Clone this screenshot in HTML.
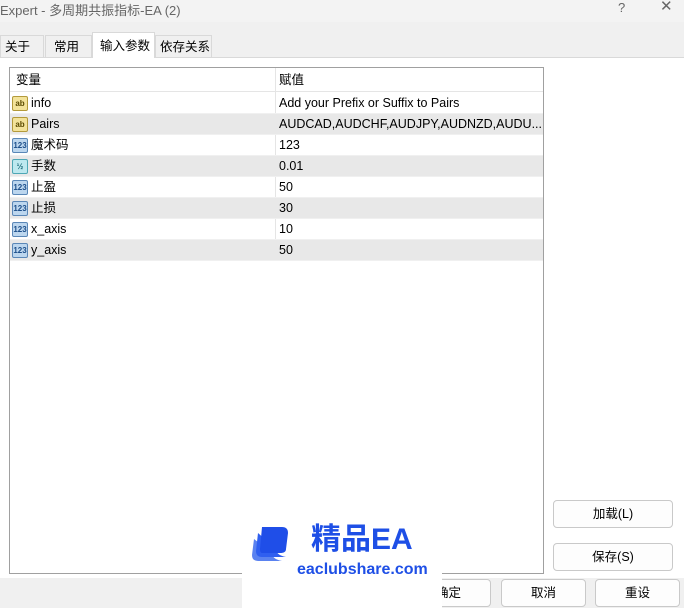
<!DOCTYPE html>
<html><head><meta charset="utf-8"><style>
*{box-sizing:border-box;margin:0;padding:0}
body{width:684px;height:608px;background:#f0f0f0;font-family:"Liberation Sans","Noto Sans CJK SC",sans-serif;font-size:12.5px;color:#000;position:relative;overflow:hidden;line-height:15px}
.abs{position:absolute}
.title{left:0;top:0;width:684px;height:22px;background:#f3f3f3;color:#666;font-size:13px;padding:3px 0 0 0}
.tab{top:35px;height:22px;border:1px solid #d9d9d9;border-bottom:none;background:#f0f0f0;padding:4px 0 0 4px}
.tabsel{top:32px;height:26px;background:#fff;border:1px solid #d9d9d9;border-bottom:none;padding:6px 0 0 7px}
.panel{left:0;top:57px;width:684px;height:521px;background:#fff;border-top:1px solid #d9d9d9}
.table{left:9px;top:67px;width:535px;height:507px;border:1px solid #a0a0a0;background:#fff}
.row{position:absolute;left:0;width:533px;height:21px;border-bottom:1px solid #f0f0f0}
.row.g{background:#e8e8e8}
.row span{position:absolute;top:3px;line-height:15px;height:15px;white-space:nowrap}
.c1{left:21px}.c2{left:269px}
.ic{position:absolute;left:2px;top:3px;width:16px;height:15px;border-radius:2px;font-size:8px;font-weight:bold;line-height:13px;text-align:center}
.ab{background:#f3e39a;border:1px solid #b39a3b;color:#5a4a00}
.n{background:#bcd6ee;border:1px solid #5a87b7;color:#1d4f8a}
.f{background:#bde8ef;border:1px solid #4ea7b5;color:#1d6b7a}
.btn{height:28px;border:1px solid #c9c9c9;border-radius:4px;background:#fdfdfd;text-align:center;line-height:26px}
</style></head><body>
<div class="abs title">Expert - 多周期共振指标-EA (2)<span class="abs" style="left:618px;top:0">?</span><span class="abs" style="left:660px;top:-1px;font-size:15px">✕</span></div>
<div class="abs panel"></div>
<div class="abs tab" style="left:0;width:44px">关于</div>
<div class="abs tab" style="left:45px;width:47px;padding-left:8px">常用</div>
<div class="abs tabsel" style="left:92px;width:63px">输入参数</div>
<div class="abs tab" style="left:155px;width:57px;padding-left:4px">依存关系</div>
<div class="abs table">
<div class="row" style="top:0;height:24px;border-bottom:1px solid #e5e5e5"><span class="c1" style="left:6px;top:5px">变量</span><span class="c2" style="top:5px">赋值</span></div>
<div class="abs" style="left:265px;top:0;width:1px;height:192px;background:#e5e5e5"></div>
<div class="row" style="top:25px"><div class="ic ab">ab</div><span class="c1">info</span><span class="c2">Add your Prefix or Suffix to Pairs</span></div>
<div class="row g" style="top:46px"><div class="ic ab">ab</div><span class="c1">Pairs</span><span class="c2">AUDCAD,AUDCHF,AUDJPY,AUDNZD,AUDU...</span></div>
<div class="row" style="top:67px"><div class="ic n">123</div><span class="c1">魔术码</span><span class="c2">123</span></div>
<div class="row g" style="top:88px"><div class="ic f">½</div><span class="c1">手数</span><span class="c2">0.01</span></div>
<div class="row" style="top:109px"><div class="ic n">123</div><span class="c1">止盈</span><span class="c2">50</span></div>
<div class="row g" style="top:130px"><div class="ic n">123</div><span class="c1">止损</span><span class="c2">30</span></div>
<div class="row" style="top:151px"><div class="ic n">123</div><span class="c1">x_axis</span><span class="c2">10</span></div>
<div class="row g" style="top:172px"><div class="ic n">123</div><span class="c1">y_axis</span><span class="c2">50</span></div>
</div>
<div class="abs" style="left:0;top:578px;width:684px;height:30px;background:#f0f0f0"></div>
<div class="abs btn" style="left:553px;top:500px;width:120px">加载(L)</div>
<div class="abs btn" style="left:553px;top:543px;width:120px">保存(S)</div>
<div class="abs btn" style="left:406px;top:579px;width:85px">确定</div>
<div class="abs btn" style="left:501px;top:579px;width:85px">取消</div>
<div class="abs btn" style="left:595px;top:579px;width:85px">重设</div>
<div class="abs" style="left:242px;top:495px;width:200px;height:113px;background:#fff">
<svg class="abs" style="left:6px;top:30px" width="44" height="44" viewBox="0 0 44 44"><path d="M6 14 L4 30 Q4 36 10 36 L34 36 Q24 34 24 28 Z" fill="#5a82f0"/><path d="M10 8 L8 26 Q8 32 14 32 L38 32 Q28 30 28 24 Z" fill="#2f5ff0"/><path d="M14 2 L34 2 Q40 2 40 8 L38 24 Q38 28 32 28 L14 28 Q12 28 12 24 Z" fill="#1f4ee8"/></svg>
<div class="abs" style="left:69px;top:28px;font-size:30px;line-height:34px;font-weight:bold;color:#1e4fe6">精品EA</div>
<div class="abs" style="left:55px;top:66px;font-size:16px;line-height:18px;font-weight:bold;color:#1e4fe6">eaclubshare.com</div>
</div>
</body></html>
